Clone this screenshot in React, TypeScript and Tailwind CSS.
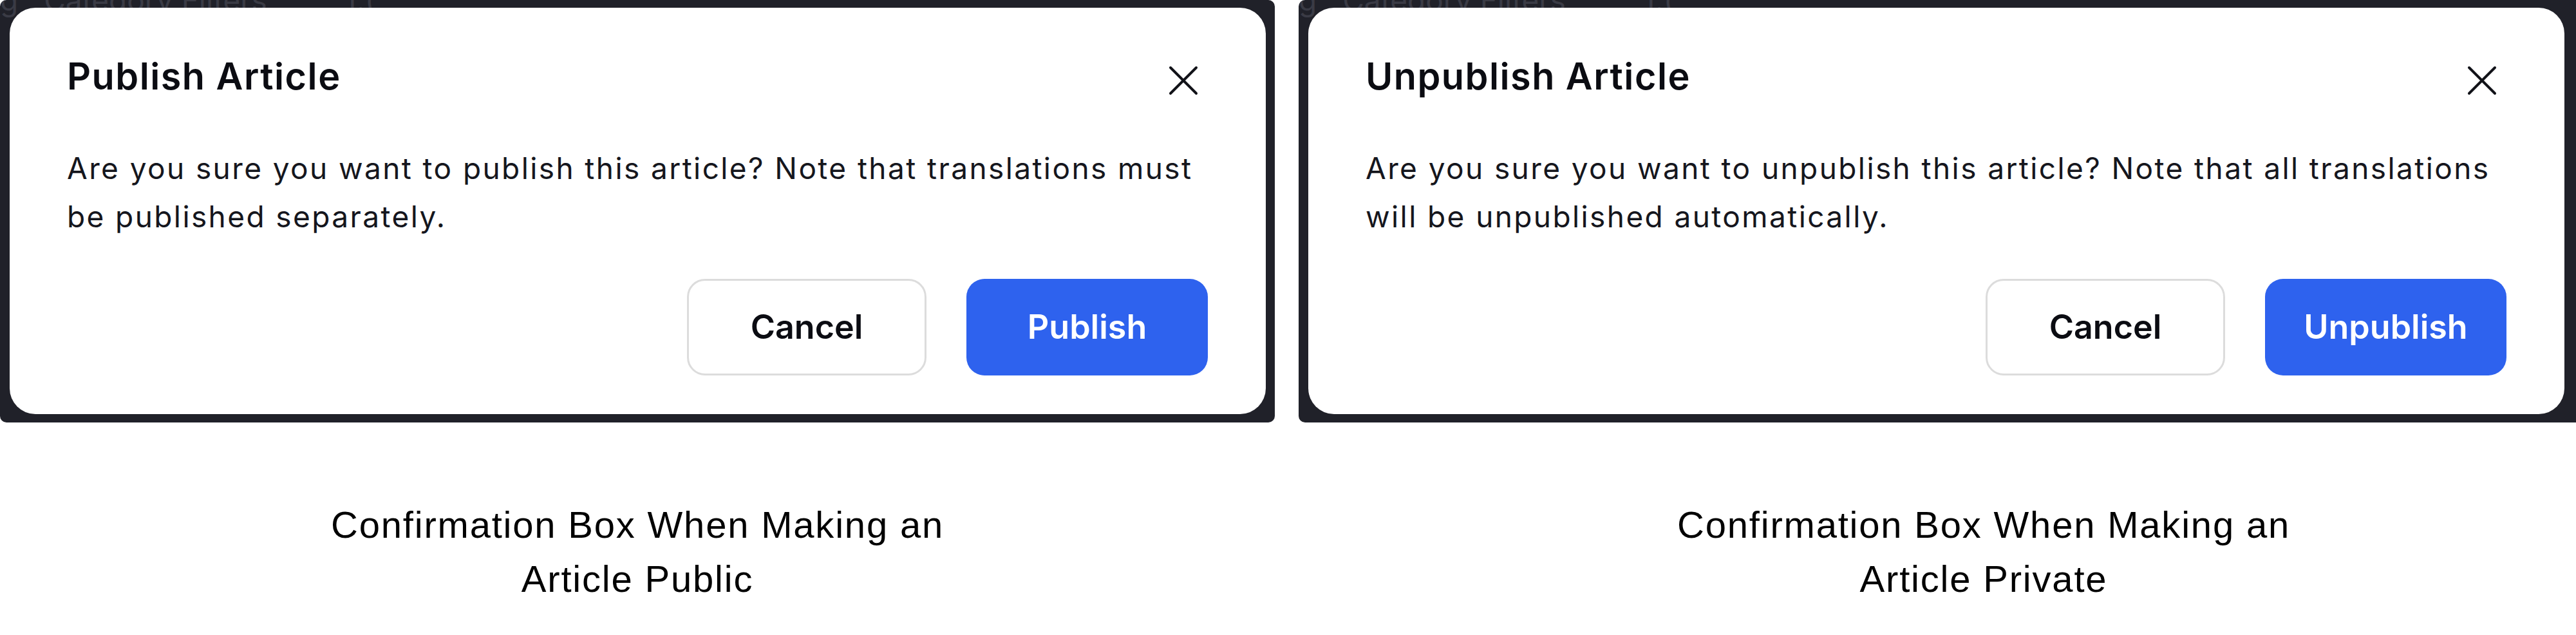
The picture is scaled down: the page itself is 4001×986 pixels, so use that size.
import React from "react";

function CloseIcon() {
  return (
    <svg width="46" height="46" viewBox="0 0 46 46" fill="none" aria-hidden="true">
      <path d="M3 3 L43 43 M43 3 L3 43" stroke="#111218" strokeWidth="4" strokeLinecap="round" />
    </svg>
  );
}

function Dialog({
  title,
  line1,
  line2,
  action,
  frameClass,
}: {
  title: string;
  line1: string;
  line2: string;
  action: string;
  frameClass: string;
}) {
  return (
    <div className={`relative shrink-0 h-[656px] bg-[#202129] rounded-[10px] pt-[12px] pl-[15px] pb-[13px] overflow-hidden ${frameClass}`}>
      <div className="absolute top-[-34px] left-0 flex gap-[40px] text-[46px] text-[#3a3b45] whitespace-nowrap font-['Inter',sans-serif]">
        <span>g</span>
        <span>Category Filters</span>
        <span className="ml-[80px]">1.(</span>
      </div>
      <div className="relative h-full w-[1951px] bg-white rounded-[40px] flex flex-col pl-[89px] pr-[90px] pt-[72px] font-['Inter',sans-serif]">
        <div className="flex items-start justify-between">
          <h2 className="text-[57.5px] leading-[69px] font-semibold text-[#0b0c12] tracking-[1.5px]">{title}</h2>
          <div className="mt-[18px] mr-[15px]">
            <CloseIcon />
          </div>
        </div>
        <p className="mt-[71px] text-[46px] leading-[75px] text-[#15161d] tracking-[2.4px] whitespace-nowrap">
          {line1}
          <br />
          {line2}
        </p>
        <div className="mt-[59px] flex justify-end gap-[62px]">
          <button className="w-[372px] h-[150px] rounded-[28px] border-[3px] border-[#dcdcdc] bg-white text-[52px] font-semibold text-[#0b0c12]">
            Cancel
          </button>
          <button className="w-[375px] h-[150px] rounded-[28px] bg-[#2e62ee] text-[52px] font-semibold text-white">
            {action}
          </button>
        </div>
      </div>
    </div>
  );
}

export default function App() {
  return (
    <div className="w-[4001px] h-[986px] bg-white overflow-hidden flex flex-col">
      <div className="flex gap-[37px]">
        <Dialog
          title="Publish Article"
          line1="Are you sure you want to publish this article? Note that translations must"
          line2="be published separately."
          action="Publish"
          frameClass="w-[1980px]"
        />
        <Dialog
          title="Unpublish Article"
          line1="Are you sure you want to unpublish this article? Note that all translations"
          line2="will be unpublished automatically."
          action="Unpublish"
          frameClass="w-[1995px]"
        />
      </div>
      <div className="mt-[117px] flex gap-[37px] font-['Liberation_Sans',Arial,sans-serif] text-[58px] leading-[84px] tracking-[1.8px] text-black">
        <div className="w-[1980px] text-center">
          Confirmation Box When Making an
          <br />
          Article Public
        </div>
        <div className="w-[1984px] pl-[144px] text-center">
          Confirmation Box When Making an
          <br />
          Article Private
        </div>
      </div>
    </div>
  );
}
